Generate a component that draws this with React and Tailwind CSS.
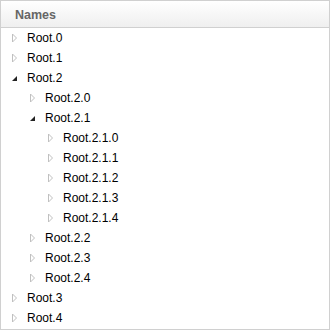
import React from "react";

const Collapsed = () => (
  <svg width="7" height="10" viewBox="0 0 7 10" className="block">
    <path d="M1.5 1 L5.5 5 L1.5 9 Z" fill="#fff" stroke="#c0c0c0" strokeWidth="1" />
  </svg>
);

const Expanded = () => (
  <svg width="7" height="10" viewBox="0 0 7 10" className="block">
    <path d="M6 3 L6 8 L1 8 Z" fill="#222" />
  </svg>
);

const rows = [
  [0, "Root.0", false],
  [0, "Root.1", false],
  [0, "Root.2", true],
  [1, "Root.2.0", false],
  [1, "Root.2.1", true],
  [2, "Root.2.1.0", false],
  [2, "Root.2.1.1", false],
  [2, "Root.2.1.2", false],
  [2, "Root.2.1.3", false],
  [2, "Root.2.1.4", false],
  [1, "Root.2.2", false],
  [1, "Root.2.3", false],
  [1, "Root.2.4", false],
  [0, "Root.3", false],
  [0, "Root.4", false],
];

const pad = ["pl-[10px]", "pl-[28px]", "pl-[46px]"];

export default function App() {
  return (
    <div className="w-[330px] h-[330px] border border-[#d0d0d0] bg-white flex flex-col" style={{ fontFamily: '"Liberation Sans", Arial, sans-serif' }}>
      <div className="h-[27px] border-b border-[#d0d0d0] bg-gradient-to-b from-white to-[#efefef] flex items-center pt-[3px] pl-[14px] text-[12.5px] font-bold text-[#666]">
        Names
      </div>
      <div className="flex flex-col">
        {rows.map(([lvl, name, open]) => (
          <div key={name} className={`h-[20px] flex items-center ${pad[lvl]} text-[12px] text-black`}>
            <div className="w-[7px] mr-[9px]">{open ? <Expanded /> : <Collapsed />}</div>
            <span>{name}</span>
          </div>
        ))}
      </div>
    </div>
  );
}
